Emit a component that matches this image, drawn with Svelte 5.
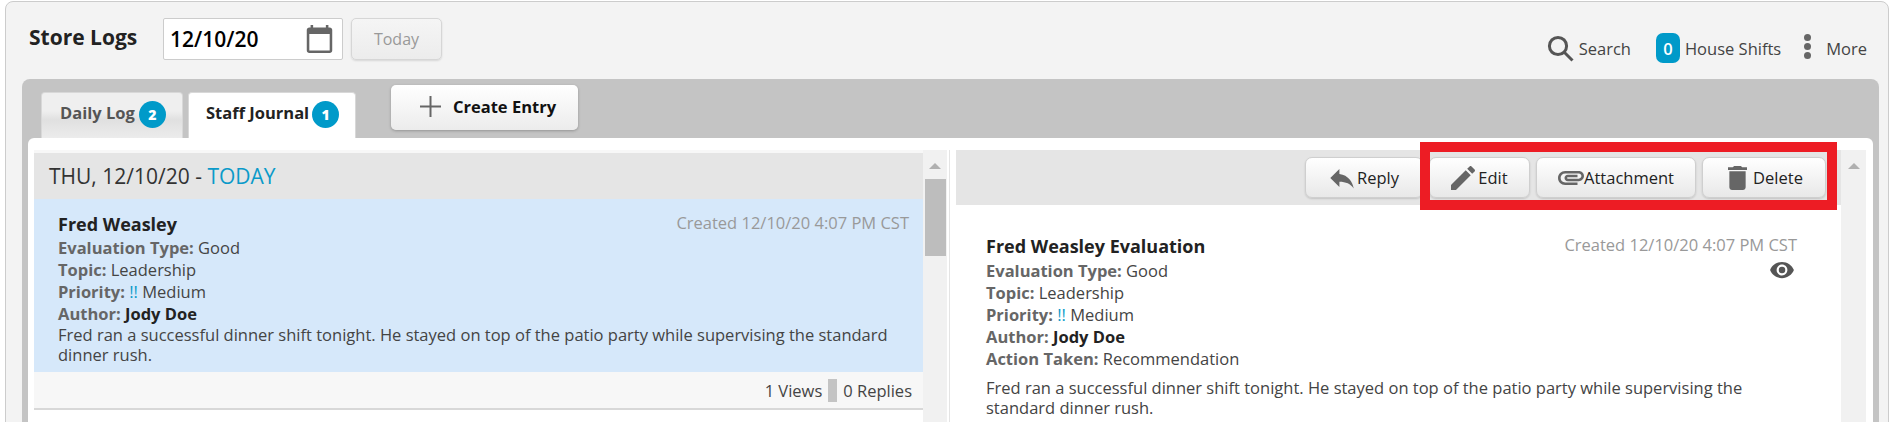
<script>
	// entry shown in both the list and the detail pane
	const fields = [
		{ label: 'Evaluation Type:', value: 'Good' },
		{ label: 'Topic:', value: 'Leadership' }
	];
	const body = 'Fred ran a successful dinner shift tonight. He stayed on top of the patio party while supervising the standard dinner rush.';
	const created = 'Created 12/10/20 4:07 PM CST';
</script>

<div class="page">
	<div class="shell">
		<header class="topbar">
			<h1>Store Logs</h1>
			<div class="date">
				<span>12/10/20</span>
				<svg width="27" height="28" viewBox="2 1 20 22"><path d="M20 3h-1V1h-2v2H7V1H5v2H4c-1.1 0-2 .9-2 2v16c0 1.1.9 2 2 2h16c1.1 0 2-.9 2-2V5c0-1.1-.9-2-2-2zm0 18H4V8h16v13z"/></svg>
			</div>
			<button class="today">Today</button>
			<nav class="tools">
				<span class="tool search">
					<svg width="27" height="27" viewBox="0 0 27 27"><circle cx="11" cy="11" r="8.6"/><path d="M17.5 17.5L25.5 25.5"/></svg>
					Search
				</span>
				<span class="tool shifts"><b>0</b>House Shifts</span>
				<span class="tool more"><i></i><i></i><i></i>More</span>
			</nav>
		</header>

		<section class="board">
			<div class="tabs">
				<div class="tab">Daily Log<b>2</b></div>
				<div class="tab active">Staff Journal<b>1</b></div>
				<button class="create">
					<svg width="21" height="21" viewBox="0 0 21 21"><path d="M10.5 0v21M0 10.5h21"/></svg>
					Create Entry
				</button>
			</div>

			<div class="content">
				<div class="list">
					<div class="entries">
						<div class="day">THU, 12/10/20 - <span>TODAY</span></div>
						<article class="entry">
							<div class="created">{created}</div>
							<h2>Fred Weasley</h2>
							{#each fields as f}
								<div class="field"><strong>{f.label}</strong> {f.value}</div>
							{/each}
							<div class="field"><strong>Priority:</strong> <em>!!</em> Medium</div>
							<div class="field"><strong>Author:</strong> <b>Jody Doe</b></div>
							<p>{body}</p>
						</article>
						<div class="counts"><span>1 Views</span><u></u><span>0 Replies</span></div>
					</div>
					<div class="scroll"><span class="arrow"></span><span class="thumb"></span></div>
				</div>

				<div class="detail">
					<div class="main">
						<div class="toolbar">
							<button class="reply">
								<svg width="26" height="26" viewBox="2 2 20 20"><path d="M10 9V5l-7 7 7 7v-4.1c5 0 8.5 1.6 11 5.1-1-5-4-10-11-11z"/></svg>
								Reply
							</button>
							<button class="edit">
								<svg width="24" height="24" viewBox="3 3 18 18"><path d="M3 17.25V21h3.75L17.81 9.94l-3.75-3.75L3 17.25zM20.71 7.04c.39-.39.39-1.02 0-1.41l-2.34-2.34c-.39-.39-1.02-.39-1.41 0l-1.83 1.83 3.75 3.75 1.83-1.83z"/></svg>
								Edit
							</button>
							<button class="attach">
								<svg width="26" height="14" viewBox="2 7 20 11" preserveAspectRatio="none"><path d="M2 12.5C2 9.46 4.46 7 7.5 7H18c2.21 0 4 1.79 4 4s-1.79 4-4 4H9.5C8.12 15 7 13.88 7 12.5S8.12 10 9.5 10H17v2H9.41c-.55 0-.55 1 0 1H18c1.1 0 2-.9 2-2s-.9-2-2-2H7.5C5.57 9 4 10.57 4 12.5S5.57 16 7.5 16H17v2H7.5C4.46 18 2 15.54 2 12.5z"/></svg>
								Attachment
							</button>
							<button class="delete">
								<svg width="19" height="24" viewBox="5 3 14 18" preserveAspectRatio="none"><path d="M6 19c0 1.1.9 2 2 2h8c1.1 0 2-.9 2-2V7H6v12zM19 4h-3.5l-1-1h-5l-1 1H5v2h14V4z"/></svg>
								Delete
							</button>
							<div class="highlight"></div>
						</div>
						<article class="view">
							<div class="meta">
								<div class="created">{created}</div>
								<svg width="26" height="26" viewBox="0 0 24 24"><path fill-rule="evenodd" d="M12 4.5C7 4.5 2.73 7.61 1 12c1.73 4.39 6 7.5 11 7.5s9.27-3.11 11-7.5c-1.73-4.39-6-7.5-11-7.5zM12 17c-2.76 0-5-2.24-5-5s2.24-5 5-5 5 2.24 5 5-2.24 5-5 5z"/><circle cx="12" cy="12" r="3"/></svg>
							</div>
							<h2>Fred Weasley Evaluation</h2>
							{#each fields as f}
								<div class="field"><strong>{f.label}</strong> {f.value}</div>
							{/each}
							<div class="field"><strong>Priority:</strong> <em>!!</em> Medium</div>
							<div class="field"><strong>Author:</strong> <b>Jody Doe</b></div>
							<div class="field"><strong>Action Taken:</strong> Recommendation</div>
							<p>{body}</p>
						</article>
					</div>
					<div class="scroll right"><span class="arrow"></span></div>
				</div>
			</div>
		</section>
	</div>
</div>

<style>
	:global(body) {
		margin: 0;
		background: #fff;
		font-family: "Open Sans", sans-serif;
		color: #333;
	}

	button {
		font-family: inherit;
		display: flex;
		align-items: center;
		justify-content: center;
		padding: 0;
		cursor: pointer;
	}

	.page {
		height: 422px;
		overflow: hidden;
		padding: 1px 5px 0;
		box-sizing: border-box;
	}

	.shell {
		height: 460px;
		background: #f3f3f3;
		border: 1px solid #ccc;
		border-radius: 8px 8px 0 0;
	}

	/* top bar */
	.topbar {
		display: flex;
		align-items: flex-start;
		height: 77px;
		padding-left: 23px;
	}

	h1 {
		margin: 19px 26px 0 0;
		width: 108px;
		white-space: nowrap;
		font-size: 21px;
		line-height: 32px;
		font-weight: 700;
		color: #222;
	}

	.date {
		margin-top: 16px;
		width: 180px;
		height: 42px;
		box-sizing: border-box;
		background: #fff;
		border: 1px solid #ccc;
		border-radius: 2px;
		display: flex;
		align-items: center;
		justify-content: space-between;
		padding: 0 9px 0 6px;
		font-size: 21px;
		font-weight: 600;
		color: #000;
	}

	.date svg {
		fill: #666;
	}

	.today {
		margin: 16px 0 0 8px;
		width: 91px;
		height: 42px;
		background: linear-gradient(#f5f5f5, #ececec);
		border: 1px solid #d6d6d6;
		border-radius: 5px;
		box-shadow: 0 1px 2px rgba(0, 0, 0, .12);
		font-size: 16px;
		color: #999;
	}

	.tools {
		margin-left: auto;
		margin-top: 31px;
		padding-right: 21px;
		display: flex;
		align-items: center;
		font-size: 16.5px;
		color: #444;
	}

	.tool {
		display: flex;
		align-items: center;
	}

	.search svg {
		margin-right: 5px;
		fill: none;
		stroke: #555;
		stroke-width: 3;
	}

	.shifts {
		margin-left: 25px;
	}

	.shifts b {
		width: 24px;
		height: 30px;
		margin-right: 5px;
		border-radius: 7px;
		background: #009ac9;
		color: #fff;
		font-weight: 600;
		display: flex;
		align-items: center;
		justify-content: center;
	}

	.more {
		margin-left: 23px;
		position: relative;
		padding-left: 22px;
	}

	.more i {
		position: absolute;
		left: 0;
		width: 7px;
		height: 7px;
		border-radius: 50%;
		background: #666;
	}

	.more i:nth-child(1) { top: -3px; }
	.more i:nth-child(2) { top: 6px; }
	.more i:nth-child(3) { top: 15px; }

	/* grey board with tabs */
	.board {
		height: 400px;
		margin: 0 9px 0 16px;
		padding: 0 6px;
		background: #c4c4c4;
		border-radius: 8px 8px 0 0;
	}

	.tabs {
		height: 59px;
		display: flex;
		align-items: flex-end;
		padding-left: 13px;
	}

	.tab {
		width: 142px;
		height: 46px;
		box-sizing: border-box;
		padding: 6px 0 0 18px;
		background: linear-gradient(#efefef 40%, #e0e0e0 60%, #ececec);
		border: 1px solid #d8d8d8;
		border-bottom: 0;
		border-radius: 4px 4px 0 0;
		display: flex;
		align-items: flex-start;
		font-size: 16.5px;
		line-height: 27px;
		font-weight: 700;
		color: #555;
	}

	.tab.active {
		width: 168px;
		margin-left: 5px;
		padding-left: 17px;
		background: #fff;
		color: #222;
	}

	.tab b {
		width: 27px;
		height: 27px;
		margin: 2px 0 0 4px;
		flex: none;
		border-radius: 50%;
		background: #009ac9;
		color: #fff;
		font-size: 14px;
		text-align: center;
		border: 0;
	}

	.tab.active b {
		margin-left: 3px;
	}

	.create {
		align-self: flex-start;
		margin: 6px 0 0 35px;
		width: 187px;
		height: 45px;
		padding: 0 0 3px 7px;
		box-sizing: border-box;
		background: linear-gradient(#fff, #ececec);
		border: 0;
		border-radius: 5px;
		box-shadow: 0 1px 3px rgba(0, 0, 0, .25);
		font-size: 16.5px;
		font-weight: 700;
		color: #111;
	}

	.create svg {
		margin-right: 12px;
		fill: none;
		stroke: #666;
		stroke-width: 2;
	}

	.content {
		display: flex;
		height: 340px;
		box-sizing: border-box;
		padding: 12px 7px 0 6px;
		background: #fff;
		border-radius: 6px 6px 0 0;
	}

	/* left list */
	.list {
		width: 913px;
		flex: none;
		display: flex;
	}

	.entries {
		width: 889px;
		flex: none;
		padding-top: 3px;
		background: linear-gradient(#f7f7f7 3px, transparent 3px);
	}

	.day {
		height: 46px;
		padding-left: 15px;
		background: #e5e5e5;
		font-size: 21px;
		line-height: 46px;
		color: #333;
	}

	.day span {
		color: #0a9ac9;
	}

	.entry {
		height: 173px;
		box-sizing: border-box;
		padding: 13px 14px 0 24px;
		background: #d6e8fa;
	}

	h2 {
		margin: 0 0 1px;
		font-size: 18px;
		line-height: 24px;
		font-weight: 700;
		color: #222;
	}

	.created {
		float: right;
		font-size: 16.5px;
		line-height: 22px;
		color: #999;
	}

	.field {
		font-size: 16.5px;
		line-height: 22px;
		color: #444;
	}

	.field strong {
		color: #666;
		font-weight: 700;
	}

	.field b {
		color: #222;
	}

	.field em {
		font-style: normal;
		color: #0a9ac9;
	}

	p {
		margin: 0;
		font-size: 16.5px;
		line-height: 19.5px;
		color: #444;
	}

	.counts {
		height: 38px;
		box-sizing: border-box;
		padding-right: 11px;
		background: #f7f7f7;
		border-bottom: 2px solid #d8d8d8;
		display: flex;
		justify-content: flex-end;
		align-items: center;
		font-size: 16.5px;
		color: #444;
	}

	.counts u {
		width: 9px;
		height: 23px;
		margin: 0 6px;
		background: #c4c4c4;
	}

	.scroll {
		width: 24px;
		flex: none;
		background: #f1f1f1;
		position: relative;
		box-sizing: border-box;
		padding-top: 13px;
		display: flex;
		flex-direction: column;
		align-items: center;
	}

	.arrow {
		width: 0;
		height: 0;
		border: 6px solid transparent;
		border-top: 0;
		border-bottom-color: #b0b0b0;
	}

	.thumb {
		display: block;
		width: 21px;
		height: 77px;
		margin-top: 10px;
		margin-left: 1px;
		background: #bdbdbd;
	}

	/* right pane */
	.detail {
		margin-left: 2px;
		padding-left: 6px;
		border-left: 1px solid #e4e4e4;
		flex: 1;
		display: flex;
		min-width: 0;
	}

	.main {
		flex: 1;
		min-width: 0;
	}

	.toolbar {
		position: relative;
		height: 55px;
		box-sizing: border-box;
		padding: 7px 15px 0 0;
		background: #e5e5e5;
		display: flex;
		justify-content: flex-end;
		align-items: flex-start;
		gap: 6px;
	}

	.toolbar button {
		height: 41px;
		background: linear-gradient(#fff, #e8e8e8);
		border: 1px solid #cfcfcf;
		border-radius: 7px;
		box-shadow: 0 1px 2px rgba(0, 0, 0, .15);
		font-size: 16.5px;
		color: #222;
	}

	.toolbar svg {
		fill: #666;
	}

	.reply { width: 118px; }
	.edit { width: 101px; }
	.attach { width: 160px; }
	.toolbar .delete { width: 124px; padding-left: 3px; }

	.reply svg { margin-right: 2px; }
	.edit svg { margin-right: 3px; }
	.delete svg { margin-right: 6px; }

	/* annotation drawn over the buttons */
	.highlight {
		position: absolute;
		left: 464px;
		top: -8px;
		width: 417px;
		height: 68px;
		box-sizing: border-box;
		border: 10px solid #ed1c24;
	}

	.view {
		padding: 29px 44px 0 30px;
	}

	.meta {
		float: right;
		display: flex;
		flex-direction: column;
		align-items: flex-end;
	}

	.meta .created {
		float: none;
	}

	.meta svg {
		fill: #555;
		margin-right: 2px;
		margin-top: 1px;
	}

	.view h2 {
		margin-bottom: 2px;
	}

	.view p {
		margin-top: 8px;
		line-height: 20px;
	}

	.scroll.right {
		width: 25px;
	}
</style>
